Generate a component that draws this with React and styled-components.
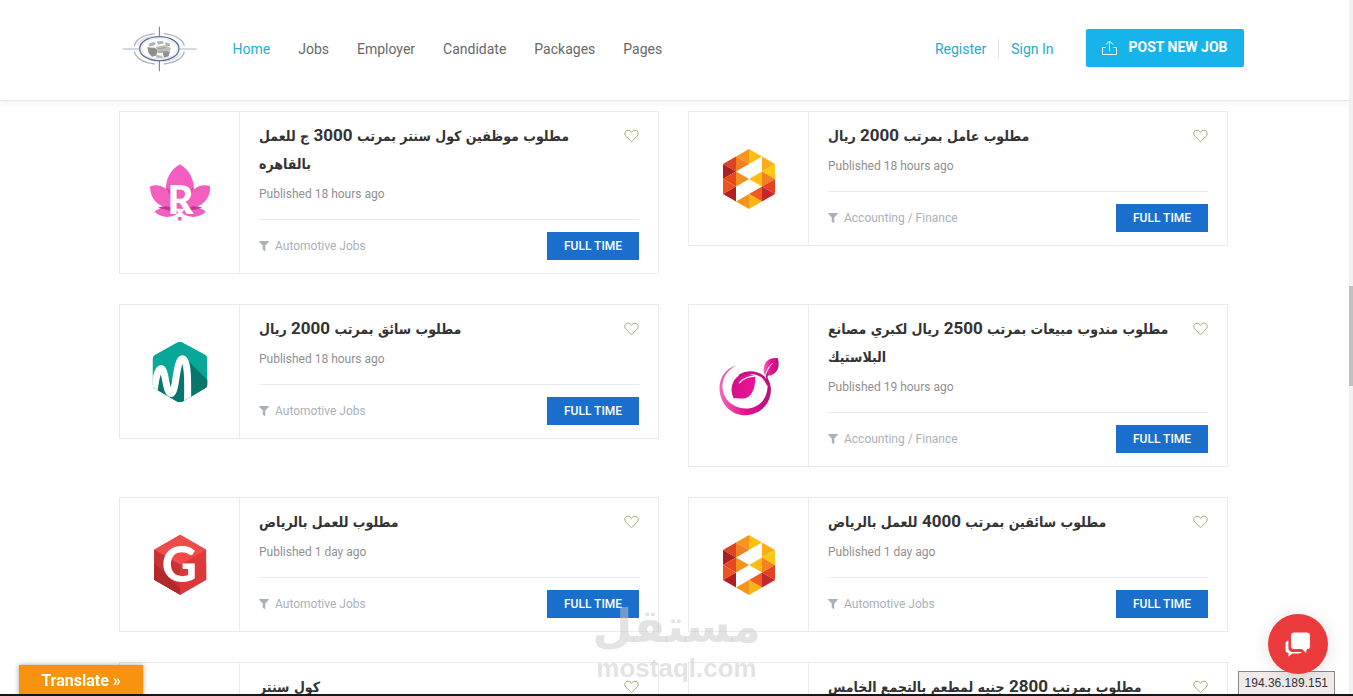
import React from "react";
import styled, { createGlobalStyle } from "styled-components";
import { FaFilter } from "react-icons/fa";

const GlobalStyle = createGlobalStyle`
  * {
    box-sizing: border-box;
  }

  body {
    margin: 0;
    background: #fefefe;
    font-family: Roboto, "DejaVu Sans", sans-serif;
    font-size: 14px;
    overflow: hidden;
  }
`;

const navLinks = ["Home", "Jobs", "Employer", "Candidate", "Packages", "Pages"];

const jobs = [
  {
    id: 1,
    logo: "lotus",
    title: "مطلوب موظفين كول سنتر بمرتب 3000 ج للعمل بالقاهره",
    published: "Published 18 hours ago",
    category: "Automotive Jobs",
  },
  {
    id: 2,
    logo: "mosaic",
    title: "مطلوب عامل بمرتب 2000 ريال",
    published: "Published 18 hours ago",
    category: "Accounting / Finance",
  },
  {
    id: 3,
    logo: "wave",
    title: "مطلوب سائق بمرتب 2000 ريال",
    published: "Published 18 hours ago",
    category: "Automotive Jobs",
  },
  {
    id: 4,
    logo: "leaf",
    title: "مطلوب مندوب مبيعات بمرتب 2500 ريال لكبري مصانع البلاستيك",
    published: "Published 19 hours ago",
    category: "Accounting / Finance",
  },
  {
    id: 5,
    logo: "cube",
    title: "مطلوب للعمل بالرياض",
    published: "Published 1 day ago",
    category: "Automotive Jobs",
  },
  {
    id: 6,
    logo: "mosaic",
    title: "مطلوب سائقين بمرتب 4000 للعمل بالرياض",
    published: "Published 1 day ago",
    category: "Automotive Jobs",
  },
  {
    id: 7,
    logo: "wave",
    title: "كول سنتر",
    published: "Published 1 day ago",
    category: "Automotive Jobs",
  },
  {
    id: 8,
    logo: "leaf",
    title: "مطلوب بمرتب 2800 جنيه لمطعم بالتجمع الخامس",
    published: "Published 1 day ago",
    category: "Accounting / Finance",
  },
];

const BrandLogo = () => (
  <svg width="76" height="46" viewBox="36 20 228 138" fill="none" aria-hidden="true">
    <path d="M38 89H88M208 89H260" stroke="#9fb4cc" strokeWidth="3" />
    <path d="M148 22V52M148 124V156" stroke="#6d7686" strokeWidth="3" />
    <ellipse cx="148" cy="88" rx="59" ry="36" stroke="#5d7393" strokeWidth="4" />
    <ellipse cx="148" cy="88" rx="53" ry="31" stroke="#d5dae2" strokeWidth="2" />
    <path
      d="M73 80Q80 50 134 43M162 43Q216 50 223 80M223 97Q216 127 162 134M134 134Q80 127 73 97"
      stroke="#aab0ba"
      strokeWidth="4"
    />
    <path d="M82 76Q92 56 134 50M214 100Q204 120 162 127" stroke="#c9d3e0" strokeWidth="3" />
    <path
      d="M118 72l14-4 6 5-8 7-14 1zM140 66l18-1 4 7-18 4zM165 69l14 3 2 9-14-2z"
      fill="#b4b4b2"
    />
    <path d="M112 84l22 1 10 8-6 16-12 3-10-10zM158 97l22 1-4 13-14 4z" fill="#8f8f8d" />
    <path d="M138 82l26-4 19 8-4 12-36 4zM136 106l20 3 3 8-20-2z" fill="#bdbdbb" />
    <path d="M120 90l10 2-2 12-6-3zM144 88l22-3M146 98l28-2" stroke="#8b8b89" strokeWidth="2" />
  </svg>
);

const LotusLogo = () => (
  <svg width="60" height="60" viewBox="28.5 22.5 180 180" aria-hidden="true">
    <g fill="#f45fbf">
      <path d="M118 26C146 42 162 72 160 106L140 160H98L76 106C74 72 90 42 118 26Z" />
      <path d="M29 92C62 82 92 100 108 160L70 154C40 142 28 118 29 92Z" />
      <path d="M209 92C176 82 146 100 130 160L168 154C198 142 210 118 209 92Z" />
      <path d="M42 168C62 152 96 150 114 172C96 188 62 190 42 168Z" />
      <path d="M196 168C176 152 142 150 124 172C142 188 176 190 196 168Z" />
    </g>
    <path d="M77 95Q92 104 98 122L84 112ZM160 95Q146 104 140 122L154 112Z" fill="#d944a3" />
    <path d="M52 157Q82 144 112 168L86 165ZM186 157Q156 144 126 168L152 165Z" fill="#c23592" />
    <text
      x="120"
      y="176"
      textAnchor="middle"
      fontFamily="Lato, sans-serif"
      fontWeight="900"
      fontSize="120"
      fill="#fff"
    >
      R
    </text>
    <circle cx="118" cy="190" r="6" fill="#e563b4" />
  </svg>
);

const mosaicTiles = [
  ["0,30 26,15 26,45", "#dc4224"],
  ["0,30 0,60 26,45", "#a91f22"],
  ["26,45 26,75 0,60", "#e8481f"],
  ["0,60 0,90 26,75", "#ea551f"],
  ["0,90 26,75 26,105", "#b11f22"],
  ["26,15 52,0 52,30", "#f7941d"],
  ["26,15 26,45 52,30", "#f0801f"],
  ["26,45 26,75 52,60", "#f7901e"],
  ["26,105 52,90 52,120", "#f7941d"],
  ["52,0 78,15 52,30", "#fdc010"],
  ["52,60 78,45 78,75", "#fdbb14"],
  ["52,90 78,75 78,105", "#ee5a22"],
  ["52,90 52,120 78,105", "#fdb515"],
  ["78,15 104,30 78,45", "#fcae17"],
  ["104,30 104,60 78,45", "#fdc716"],
  ["78,45 104,60 78,75", "#f58220"],
  ["104,60 104,90 78,75", "#e5431f"],
  ["78,75 104,90 78,105", "#c2272a"],
];

const MosaicLogo = () => (
  <svg width="60" height="60" viewBox="-8 0 120 120" aria-hidden="true">
    {mosaicTiles.map(([points, fill]) => (
      <polygon key={points} points={points} fill={fill} />
    ))}
  </svg>
);

const WaveLogo = () => (
  <svg width="60" height="60" viewBox="28.5 19.5 180 180" aria-hidden="true">
    <defs>
      <clipPath id="waveHex">
        <path d="M110 21Q118 16 126 21L194 58Q201 62 201 71V146Q201 154 194 158L128 197Q118 203 108 197L44 160Q36 156 36 147V71Q36 62 44 58Z" />
      </clipPath>
    </defs>
    <g clipPath="url(#waveHex)">
      <rect x="28" y="10" width="182" height="200" fill="#07a79a" />
      <path d="M132 66L210 142V210H48L38 160L66 96L92 140Z" fill="#08766a" />
      <path
        d="M40 176C44 138 50 99 62 99C75 99 76 174 91 174C108 174 106 70 126 70C144 70 142 150 141 206"
        fill="none"
        stroke="#fff"
        strokeWidth="21"
      />
    </g>
  </svg>
);

const LeafLogo = () => (
  <svg width="60" height="60" viewBox="25.5 16.5 180 180" aria-hidden="true">
    <defs>
      <linearGradient id="leafFill" x1="0" y1="0" x2="1" y2="0">
        <stop offset="0" stopColor="#f069b8" />
        <stop offset="0.5" stopColor="#e6108f" />
        <stop offset="1" stopColor="#b80f7d" />
      </linearGradient>
      <linearGradient id="leafInner" x1="0" y1="0" x2="1" y2="0">
        <stop offset="0" stopColor="#cf1384" />
        <stop offset="1" stopColor="#f0129a" />
      </linearGradient>
    </defs>
    <path
      d="M77 44C42 56 26 84 27 116C30 164 64 194 105 194C154 192 184 154 181 112C179 94 172 82 164 74C170 88 172 98 171 112C168 150 142 174 104 174C66 172 40 148 36 114C34 84 48 60 77 44Z"
      fill="url(#leafFill)"
    />
    <path
      d="M70 144C58 122 62 92 84 76C100 66 122 68 134 78C136 110 124 142 100 144C88 145 78 142 70 144Z"
      fill="url(#leafInner)"
    />
    <path d="M86 76C120 56 162 68 173 104" fill="none" stroke="#c5107f" strokeWidth="8" />
    <path d="M86 98Q102 78 136 76" fill="none" stroke="#fff" strokeWidth="4" />
    <path d="M160 68C156 38 172 20 202 23C210 52 198 74 172 76Z" fill="url(#leafFill)" />
    <path d="M166 84Q164 58 186 38" fill="none" stroke="#fff" strokeWidth="3" />
    <path d="M172 100Q165 82 172 66" fill="none" stroke="#c5107f" strokeWidth="5" />
  </svg>
);

const CubeLogo = () => (
  <svg width="60" height="60" viewBox="28.5 19.5 180 180" aria-hidden="true">
    <path d="M119 19L197 64V154L119 199L41 154V64Z" fill="#e23a3c" />
    <path d="M119 19L197 64L119 109L41 64Z" fill="#f04b4b" />
    <path d="M41 64L119 109V199L41 154Z" fill="#c93235" />
    <path d="M74 136L119 180V199L41 154V104Z" fill="#b3282d" />
    <path d="M119 109L170 88L197 104V154L119 199Z" fill="#dc383b" />
    <text
      x="117"
      y="160"
      textAnchor="middle"
      fontFamily="Lato, sans-serif"
      fontWeight="900"
      fontSize="146"
      fill="#fff"
    >
      G
    </text>
  </svg>
);

const logos = {
  lotus: LotusLogo,
  mosaic: MosaicLogo,
  wave: WaveLogo,
  leaf: LeafLogo,
  cube: CubeLogo,
};

const HeartIcon = () => (
  <svg width="15" height="14" viewBox="0 0 15 14" fill="none" stroke="#a3b073" aria-hidden="true">
    <path d="M7.5 12.8L1.7 6.9C-0.2 4.6 1 1.2 4 1.2C5.8 1.2 7 2.3 7.5 3.5C8 2.3 9.2 1.2 11 1.2C14 1.2 15.2 4.6 13.3 6.9Z" />
  </svg>
);

const UploadIcon = () => (
  <svg width="15" height="15" viewBox="0 0 15 15" fill="none" stroke="#fff" aria-hidden="true">
    <path d="M3.5 7.5H0.5V14.5H14.5V7.5H11.5M7.5 11V1M4 4.5L7.5 1L11 4.5" />
  </svg>
);

const ChatIcon = () => (
  <svg width="26" height="26" viewBox="0 0 26 26" aria-hidden="true">
    <path
      d="M3.4 9.5Q0.6 10 0.6 12.5V19Q0.6 21.8 3.5 22V25.4L7.4 22.4H14Q16 22.4 17 21H8Q3 21 3.4 16Z"
      fill="#fff"
    />
    <path
      d="M9 1H22Q25.4 1 25.4 4.4V15.4Q25.4 18.6 22 18.8L21.6 23L17 18.6H9Q5.6 18.6 5.6 15.4V4.4Q5.6 1 9 1Z"
      fill="#fff"
      stroke="#ea3a3c"
    />
  </svg>
);

const JobTitle = ({ text }) => (
  <Title>
    {text
      .split(/(\d+)/)
      .map((part, i) => (/\d/.test(part) ? <Amount key={i}>{part}</Amount> : part))}
  </Title>
);

const JobCard = ({ job }) => {
  const Logo = logos[job.logo];

  return (
    <Card>
      <LogoCell>
        <Logo />
      </LogoCell>
      <CardBody>
        <TitleRow>
          <JobTitle text={job.title} />
          <FavouriteButton type="button" aria-label="Save job">
            <HeartIcon />
          </FavouriteButton>
        </TitleRow>
        <Published>{job.published}</Published>
        <CardFooter>
          <Category href="#">
            <FaFilter size={10} />
            {job.category}
          </Category>
          <JobType href="#">FULL TIME</JobType>
        </CardFooter>
      </CardBody>
    </Card>
  );
};

const App = () => {
  return (
    <Page>
      <GlobalStyle />
      <Header>
        <HeaderInner>
          <Brand href="#" aria-label="Homepage">
            <BrandLogo />
          </Brand>
          <Nav>
            {navLinks.map((link) => (
              <NavLink href="#" key={link} $active={link === "Home"}>
                {link}
              </NavLink>
            ))}
          </Nav>
          <Account>
            <AccountLink href="#">Register</AccountLink>
            <AccountLink href="#">Sign In</AccountLink>
          </Account>
          <PostButton type="button">
            <UploadIcon />
            POST NEW JOB
          </PostButton>
        </HeaderInner>
      </Header>

      <JobGrid>
        {jobs.map((job) => (
          <JobCard job={job} key={job.id} />
        ))}
      </JobGrid>

      <Watermark>
        <WatermarkArabic>مستقل</WatermarkArabic>
        <WatermarkLatin>mostaql.com</WatermarkLatin>
      </Watermark>
      <TranslateButton type="button">Translate »</TranslateButton>
      <Address>194.36.189.151</Address>
      <ChatButton type="button" aria-label="Chat">
        <ChatIcon />
      </ChatButton>
      <ScrollTrack>
        <ScrollThumb />
      </ScrollTrack>
      <BottomEdge />
    </Page>
  );
};

const Page = styled.div`
  height: 100vh;
  overflow: hidden;
`;

const Header = styled.header`
  position: relative;
  padding-right: 6px;
  background: #fff;
  border-bottom: 1px solid #e8e8e8;
  box-shadow: 0 2px 8px rgba(0, 0, 0, 0.05);
`;

const HeaderInner = styled.div`
  display: flex;
  align-items: center;
  height: 100px;
  max-width: 1140px;
  margin: 0 auto;
  padding: 0 0 2px 18px;
`;

const Brand = styled.a`
  display: flex;
  margin-right: 35px;
`;

const Nav = styled.nav`
  display: flex;
  gap: 28px;
`;

const NavLink = styled.a`
  color: ${(props) => (props.$active ? "#25b0cf" : "#686868")};
  line-height: 20px;
  text-decoration: none;
`;

const Account = styled.div`
  display: flex;
  margin-left: auto;
`;

const AccountLink = styled.a`
  padding: 0 12px;
  color: #2ba9c8;
  line-height: 20px;
  text-decoration: none;

  & + & {
    border-left: 1px solid #dfe5e8;
  }
`;

const PostButton = styled.button`
  display: flex;
  align-items: center;
  gap: 12px;
  height: 38px;
  margin: 0 0 2px 20px;
  padding: 0 16px 2px;
  border: none;
  border-radius: 2px;
  background: #17b4ec;
  color: #fff;
  font-family: inherit;
  font-size: 14px;
  font-weight: 700;
  cursor: pointer;
`;

const JobGrid = styled.main`
  display: grid;
  grid-template-columns: 1fr 1fr;
  align-items: start;
  gap: 30px 29px;
  max-width: 1115px;
  margin: 0 auto;
  padding: 10px 6px 0 0;
`;

const Card = styled.article`
  display: flex;
  border: 1px solid #ebebeb;
  background: #fff;
`;

const LogoCell = styled.div`
  display: flex;
  flex: none;
  align-items: center;
  justify-content: center;
  width: 120px;
  border-right: 1px solid #ebebeb;
`;

const CardBody = styled.div`
  flex: 1;
  padding: 10px 19px 13px;
`;

const TitleRow = styled.div`
  display: flex;
  align-items: flex-start;
  justify-content: space-between;
`;

const Title = styled.h3`
  max-width: 350px;
  margin: 0;
  color: #333;
  font-family: "DejaVu Sans Condensed", "DejaVu Sans", sans-serif;
  font-size: 14px;
  font-weight: 700;
  line-height: 28px;
`;

const Amount = styled.span`
  font-family: Roboto, sans-serif;
  font-size: 17px;
  line-height: 20px;
`;

const FavouriteButton = styled.button`
  display: flex;
  align-items: center;
  height: 28px;
  padding: 0;
  border: none;
  background: none;
  cursor: pointer;
`;

const Published = styled.p`
  margin: 6px 0 15px;
  color: #909090;
  font-size: 12px;
  line-height: 20px;
`;

const CardFooter = styled.div`
  display: flex;
  align-items: center;
  justify-content: space-between;
  padding-top: 12px;
  border-top: 1px solid #ebebeb;
`;

const Category = styled.a`
  display: flex;
  align-items: center;
  gap: 6px;
  color: #a9b1ba;
  font-size: 12px;
  line-height: 20px;
  text-decoration: none;
`;

const JobType = styled.a`
  width: 92px;
  background: #196fcb;
  color: #fff;
  font-size: 12px;
  font-weight: 500;
  line-height: 28px;
  text-align: center;
  text-decoration: none;
`;

const Watermark = styled.div`
  position: fixed;
  right: 0;
  bottom: 12px;
  left: 0;
  display: flex;
  flex-direction: column;
  align-items: center;
  color: rgba(200, 200, 200, 0.5);
  font-weight: 700;
  pointer-events: none;
`;

const WatermarkArabic = styled.span`
  font-family: "DejaVu Sans", sans-serif;
  font-size: 46px;
  line-height: 52px;
`;

const WatermarkLatin = styled.span`
  font-family: "Liberation Sans", Arial, sans-serif;
  font-size: 26px;
  line-height: 32px;
`;

const TranslateButton = styled.button`
  position: fixed;
  bottom: 0;
  left: 19px;
  width: 124px;
  height: 31px;
  padding: 0;
  border: none;
  background: #f8930f;
  box-shadow: 0 0 5px rgba(0, 0, 0, 0.35);
  color: #fff;
  font-family: inherit;
  font-size: 16px;
  font-weight: 700;
  cursor: pointer;
`;

const Address = styled.div`
  position: fixed;
  right: 18px;
  bottom: 0;
  padding: 0 6px;
  border: 1px solid #8b8585;
  background: #f0eaea;
  color: #333;
  font-family: "Liberation Sans", Arial, sans-serif;
  font-size: 12px;
  line-height: 23px;
`;

const ChatButton = styled.button`
  position: fixed;
  right: 25px;
  bottom: 22px;
  display: flex;
  align-items: center;
  justify-content: center;
  width: 60px;
  height: 60px;
  border: none;
  border-radius: 50%;
  background: #ea3a3c;
  box-shadow: 0 2px 16px rgba(0, 0, 0, 0.12);
  cursor: pointer;
`;

const ScrollTrack = styled.div`
  position: fixed;
  top: 0;
  right: 0;
  bottom: 0;
  width: 4px;
  padding-top: 286px;
  background: #f1f1f1;
`;

const ScrollThumb = styled.div`
  height: 100px;
  background: #c1c1c1;
`;

const BottomEdge = styled.div`
  position: fixed;
  right: 0;
  bottom: 0;
  left: 0;
  height: 2px;
  background: #15151a;
`;

export default App;
